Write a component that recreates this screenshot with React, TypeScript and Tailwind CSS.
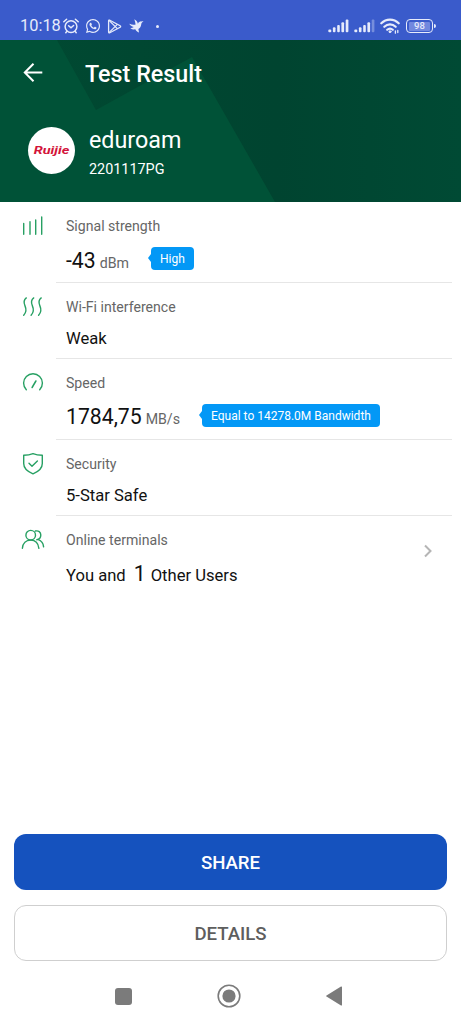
import React from 'react';
import { FaWhatsapp } from 'react-icons/fa';

interface ResultRowProps {
  icon: React.ReactNode;
  label: string;
  children: React.ReactNode;
  tall?: boolean;
  last?: boolean;
}

const AlarmIcon = () => (
  <svg className="w-4 h-4" viewBox="0 0 16 16" fill="none" stroke="currentColor" strokeWidth="1.5" strokeLinecap="round">
    <circle cx="8" cy="8.6" r="5.9" />
    <path d="M.8 3.8 3.6 1.2M15.2 3.8 12.4 1.2M3.8 13.4 2.8 14.7M12.2 13.4l1 1.3" />
    <path d="m5.6 7.7 2.4 2.1 2.6-2.3" />
  </svg>
);

const PlayIcon = () => (
  <svg className="w-[15px] h-[15px]" viewBox="0 0 15 15" fill="none" stroke="currentColor" strokeWidth="1.3" strokeLinejoin="round">
    <path d="M1.6 1.9v11.2c0 .7.6 1 1.2.7l10.4-5.6c.6-.3.6-1.1 0-1.4L2.8 1.2c-.6-.3-1.2 0-1.2.7Z" />
    <path d="M2 1.4 10.3 9.6M2 13.6l8.3-8.2" />
  </svg>
);

const BirdIcon = () => (
  <svg className="w-[15px] h-[14px]" viewBox="0 0 15 14" fill="currentColor">
    <path d="M5.3.3C7.6 1.6 8.6 3 8.9 4.8 9.6 3 10.8 2.3 14.6 2.3 12.9 3.3 12.4 4.2 12.2 5.6 11.9 7.8 11 9.2 9.4 9.9L10 13.5C8.3 13 7.2 12 6.3 10.3 4.5 10.6 2.8 10.2 1.3 8.9 2.7 8.9 3.7 8.6 4.7 7.9 2.6 7.5 1.2 6.5.3 4.8 2.6 5.7 4.600 5.900 6.600 5.500 6.300 3.700 5.900 2 5.300.3Z" />
  </svg>
);

const SignalBars = ({ weak = false }: { weak?: boolean }) => (
  <svg className="w-[21px] h-[14px]" viewBox="0 0 21 14" fill="currentColor">
    <rect x=".3" y="10.5" width="3" height="2.8" rx="1" />
    <rect x="4.9" y="8.3" width="2.6" height="5" rx="1" />
    <rect x="9.2" y="6" width="2.6" height="7.3" rx="1" />
    <rect x="13.4" y="3.3" width="2.7" height="10" rx="1" />
    <rect x="17.7" y=".4" width="2.7" height="12.9" rx="1" opacity={weak ? 0.35 : 1} />
  </svg>
);

const WifiIcon = () => (
  <svg className="w-5 h-4" viewBox="0 0 20 16" fill="none" stroke="currentColor" strokeWidth="2.2" strokeLinecap="round">
    <path d="M1.3 5.3C6.2.4 13.8.4 18.7 5.3" />
    <path d="M4.3 8.8c3.3-3.2 8.1-3.2 11.4 0" />
    <path d="M7.2 11.8c1.7-1.5 3.9-1.5 5.6 0" />
    <circle cx="10" cy="13.7" r="1" fill="currentColor" strokeWidth="1" />
    <path d="M15.4 15.2v-2.2M17.8 12.4v2.2" strokeWidth="1.3" />
  </svg>
);

const BatteryIcon = () => (
  <div className="flex items-center gap-px">
    <div className="flex h-[14px] w-[27px] items-center justify-center rounded-[4px] border-[1.5px] border-[#e6ebfb]">
      <span className="flex h-[9px] w-[21px] items-center justify-center rounded-[1px] bg-[#7188de] text-[9.5px] leading-none font-medium">
        98
      </span>
    </div>
    <div className="h-1 w-[2px] rounded-r bg-[#e6ebfb]" />
  </div>
);

const StrengthIcon = () => (
  <svg className="w-6 h-6" viewBox="0 0 24 24" fill="none" stroke="#27a063" strokeWidth="1.4" strokeLinecap="round">
    <path d="M2.7 9.5v10.8M9 7.7v12.6M14.7 6v14.3M20.7 3v17.3" />
  </svg>
);

const InterferenceIcon = () => (
  <svg className="w-6 h-6" viewBox="0 0 24 24" fill="none" stroke="#27a063" strokeWidth="1.4" strokeLinecap="round">
    <path d="M5.3 2.9C2.300 5.200 2.600 7.700 4 10.900s1.600 6.300-1.300 9.300" />
    <path d="M12.700 2.900c-3 2.300-2.700 4.800-1.300 8s1.600 6.300-1.300 9.300" />
    <path d="M20.200 2.900c-3 2.300-2.700 4.800-1.300 8s1.600 6.300-1.300 9.300" />
  </svg>
);

const SpeedIcon = () => (
  <svg className="w-6 h-6" viewBox="0 0 24 24" fill="none" stroke="#27a063" strokeWidth="1.4" strokeLinecap="round">
    <path d="M5.3 18.7a9.4 9.4 0 1 1 13.4 0" />
    <path d="m14.9 10-3.8 6.500" strokeWidth="1.5" />
  </svg>
);

const ShieldIcon = () => (
  <svg className="w-6 h-6" viewBox="0 0 24 24" fill="none" stroke="#27a063" strokeWidth="1.4" strokeLinecap="round" strokeLinejoin="round">
    <path d="M12 1.600c-2.800 1.100-5.800 1.600-9.300 1.700v8.200c0 5 3.300 7.900 9.300 10.300 6-2.400 9.300-5.300 9.300-10.300V3.300c-3.500-.1-6.500-.6-9.300-1.700Z" />
    <path d="m8 11.300 3 3 5.400-5.300" />
  </svg>
);

const UsersIcon = () => (
  <svg className="w-6 h-6" viewBox="0 0 24 24" fill="none" stroke="#27a063" strokeWidth="1.4" strokeLinecap="round">
    <circle cx="9.7" cy="7.2" r="4.8" />
    <path d="M1.400 20.300c.4-5 3.700-8.200 8.300-8.200s7.600 3.200 8.200 8.200" />
    <path d="M14.400 3c3-.7 5.400 1.100 5.400 4 0 2.500-1.500 4.300-4 4.700M17.300 11.700c3.200 1.200 5 3.700 5.300 7.200" />
  </svg>
);

const Badge = ({ children }: { children: React.ReactNode }) => (
  <div className="mb-[2px] flex items-center">
    <svg className="h-2 w-[3px]" viewBox="0 0 3 8" fill="#0398f6">
      <path d="M3 0v8L0 4Z" />
    </svg>
    <span className="flex h-[23px] items-center rounded-[4px] bg-[#0398f6] px-[9px] pt-px text-[12px] whitespace-nowrap text-white">
      {children}
    </span>
  </div>
);

const ResultRow: React.FC<ResultRowProps> = ({ icon, label, children, tall, last }) => (
  <div className={`flex ${tall ? 'h-[81px]' : 'h-[76px]'}`}>
    <div className="w-14 shrink-0 pt-3 pl-[21px]">{icon}</div>
    <div className={`mr-[9px] flex-1 pt-[14px] pl-[10px] ${last ? '' : 'border-b border-[#e6e6e6]'}`}>
      <div className="text-[14.1px] leading-5 text-[#666]">{label}</div>
      <div className={`flex items-center text-[16.6px] text-[#111] ${tall ? 'mt-2 h-[30px]' : 'mt-[10px] h-6'}`}>
        {children}
      </div>
    </div>
  </div>
);

const App = () => {
  return (
    <div className="flex h-[1024px] w-[461px] flex-col overflow-hidden bg-white font-['Roboto',sans-serif]">
      {/* Status bar */}
      <div className="flex h-10 shrink-0 items-center bg-[#3a5bcb] pt-3 pr-[25px] pl-5 text-[#e6ebfb]">
        <span className="w-[43px] pt-px text-[16.4px]">10:18</span>
        <AlarmIcon />
        <FaWhatsapp className="ml-[6px] h-4 w-4" />
        <span className="ml-[6px]"><PlayIcon /></span>
        <span className="ml-[7px]"><BirdIcon /></span>
        <span className="ml-3 h-[3px] w-[3px] rounded-full bg-current" />
        <div className="ml-auto flex items-center">
          <SignalBars />
          <span className="mr-[5px] ml-[5px]"><SignalBars weak /></span>
          <WifiIcon />
          <span className="ml-[6px]"><BatteryIcon /></span>
        </div>
      </div>

      {/* Header */}
      <div className="relative h-[162px] shrink-0 bg-[#004530] text-white">
        <svg className="absolute inset-0 h-full w-full" viewBox="0 0 461 162" preserveAspectRatio="none">
          <defs>
            <linearGradient id="dark" x1="0" y1="0" x2="1" y2="0">
              <stop offset="0" stopColor="#004a32" />
              <stop offset=".6" stopColor="#004430" />
              <stop offset="1" stopColor="#004a34" />
            </linearGradient>
          </defs>
          <path d="M0 0h461v162H0Z" fill="url(#dark)" />
          <path d="M0 0h57l39 70 96-53 83 145H0Z" fill="#005237" />
        </svg>
        <div className="relative flex h-[68px] items-center pl-[22px]">
          <svg className="mb-[2px] h-[22px] w-[22px]" viewBox="0 0 22 22" fill="none" stroke="currentColor" strokeWidth="2">
            <path d="M20.3 10.5H3M11.5 1.8 2.8 10.5l8.700 8.700" />
          </svg>
          <h1 className="ml-[41px] text-[23.3px] font-medium">Test Result</h1>
        </div>
        <div className="relative flex items-start pl-7">
          <div className="mt-[19px] flex h-[47px] w-[47px] items-center justify-center rounded-full bg-white">
            <span className="scale-x-[1.32] pb-px text-[11px] leading-none font-bold text-[#d3143a] italic">
              Ruijie
            </span>
          </div>
          <div className="ml-[14px] pt-[15px]">
            <div className="text-[23.3px] leading-[34px]">eduroam</div>
            <div className="pt-px text-[14.4px] leading-6">2201117PG</div>
          </div>
        </div>
      </div>

      {/* Results */}
      <div className="flex-1">
        <ResultRow icon={<StrengthIcon />} label="Signal strength" tall>
          <div className="flex w-[82px] items-baseline pt-[3px]">
            <span className="text-[21.2px]">-43</span>
            <span className="ml-1 text-[14.2px] text-[#666]">dBm</span>
          </div>
          <Badge>High</Badge>
        </ResultRow>
        <ResultRow icon={<InterferenceIcon />} label="Wi-Fi interference">Weak</ResultRow>
        <ResultRow icon={<SpeedIcon />} label="Speed" tall>
          <div className="flex w-[133px] items-baseline pt-[2px]">
            <span className="text-[21.2px]">1784,75</span>
            <span className="ml-1 text-[14.2px] text-[#666]">MB/s</span>
          </div>
          <Badge>Equal to 14278.0M Bandwidth</Badge>
        </ResultRow>
        <ResultRow icon={<ShieldIcon />} label="Security">5-Star Safe</ResultRow>
        <div className="relative">
          <ResultRow icon={<UsersIcon />} label="Online terminals" tall last>
            <div className="flex items-baseline pt-[2px]">
              <span>You and</span>
              <span className="mr-[5px] ml-2 text-[21.2px]">1</span>
              <span>Other Users</span>
            </div>
          </ResultRow>
          <svg className="absolute top-[28px] right-[28px] h-[14px] w-[10px]" viewBox="0 0 10 14" fill="none" stroke="#b5b5b5" strokeWidth="2">
            <path d="m2 1.500 5.500 5.500L2 12.500" />
          </svg>
        </div>
      </div>

      {/* Actions */}
      <div className="flex shrink-0 flex-col gap-[15px] px-[14px]">
        <button className="h-14 rounded-[12px] bg-[#1552be] pt-[3px] text-[18.6px] font-medium text-white">SHARE</button>
        <button className="h-14 rounded-[12px] border border-[#cfcfcf] bg-white pt-[3px] text-[18.6px] font-medium text-[#5e5e5e]">
          DETAILS
        </button>
      </div>

      {/* System navigation */}
      <div className="flex h-[63px] shrink-0 items-center pt-[7px] pl-[115px] text-[#7b7b7b]">
        <div className="h-[17px] w-[17px] rounded-[3px] bg-current" />
        <svg className="ml-[85px] h-6 w-6" viewBox="0 0 24 24">
          <circle cx="12" cy="12" r="10.8" fill="none" stroke="currentColor" strokeWidth="1.6" />
          <circle cx="12" cy="12" r="6.600" fill="currentColor" />
        </svg>
        <svg className="ml-[85px] h-5 w-4" viewBox="0 0 16 20" fill="currentColor">
          <path d="M15 .5c.6-.3 1 0 1 .6v17.800c0 .6-.4.900-1 .6L.500 10.600c-.5-.3-.5-.9 0-1.200Z" />
        </svg>
      </div>
    </div>
  );
};

export default App;
